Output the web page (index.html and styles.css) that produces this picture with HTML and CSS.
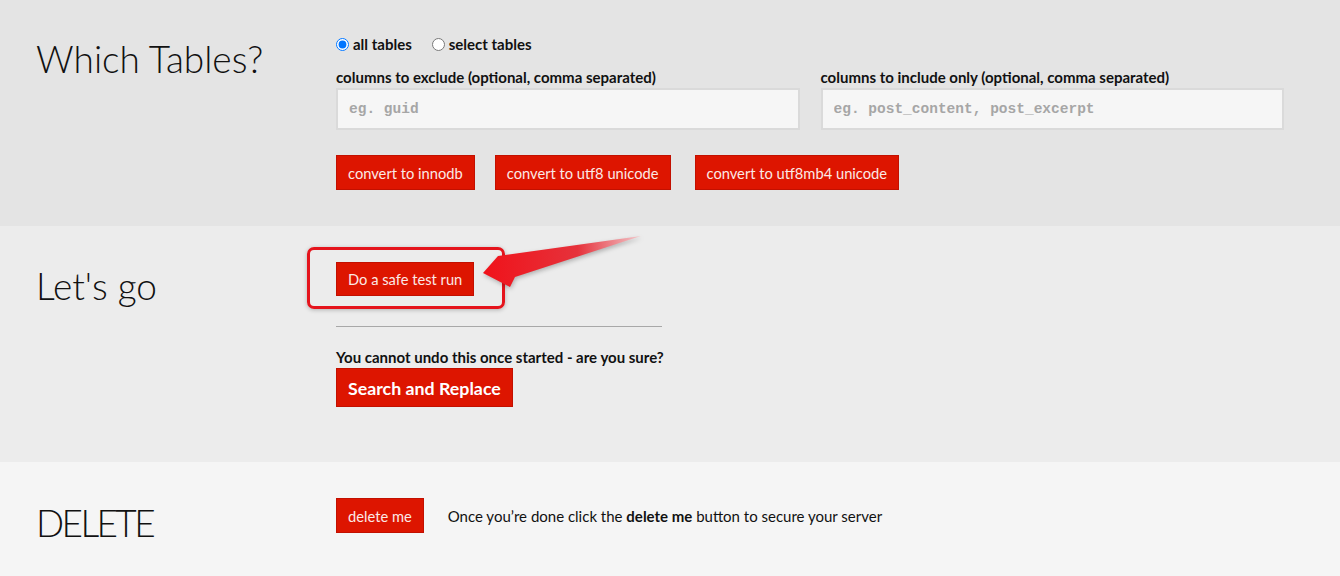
FILE: index.html
```html
<!DOCTYPE html>
<html lang="en">
<head>
    <meta charset="UTF-8">
    <title>Search Replace DB</title>
    <link rel="stylesheet" href="styles.css">
</head>
<body>
    <!-- Which tables -->
    <section class="panel panel-tables">
        <h2 class="panel-title">Which Tables?</h2>
        <div class="panel-body">
            <div class="radio-row">
                <label class="radio"><input type="radio" name="tables" checked> all tables</label>
                <label class="radio"><input type="radio" name="tables"> select tables</label>
            </div>
            <div class="fields">
                <div class="field">
                    <label class="field-label">columns to exclude (optional, comma separated)</label>
                    <input class="text-input" type="text" placeholder="eg. guid">
                </div>
                <div class="field">
                    <label class="field-label">columns to include only (optional, comma separated)</label>
                    <input class="text-input" type="text" placeholder="eg. post_content, post_excerpt">
                </div>
            </div>
            <div class="button-row">
                <button class="btn">convert to innodb</button>
                <button class="btn">convert to utf8 unicode</button>
                <button class="btn">convert to utf8mb4 unicode</button>
            </div>
        </div>
    </section>

    <!-- Let's go -->
    <section class="panel panel-go">
        <h2 class="panel-title">Let's go</h2>
        <div class="panel-body">
            <div class="testrun">
                <button class="btn">Do a safe test run</button>
                <span class="callout"></span>
                <svg class="arrow" width="170" height="60" viewBox="0 0 170 60">
                    <defs>
                        <linearGradient id="arrowfill" x1="0" y1="0" x2="1" y2="0">
                            <stop offset="0" stop-color="#f0121a"/>
                            <stop offset="0.6" stop-color="#e6323b"/>
                            <stop offset="1" stop-color="#f3c8cc"/>
                        </linearGradient>
                    </defs>
                    <polygon points="4,38 19,21 162,1 36,42 31,52" fill="url(#arrowfill)"/>
                </svg>
            </div>
            <hr class="divider">
            <p class="warning">You cannot undo this once started - are you sure?</p>
            <button class="btn btn-big">Search and Replace</button>
        </div>
    </section>

    <!-- Delete -->
    <section class="panel panel-delete">
        <h2 class="panel-title">DELETE</h2>
        <div class="panel-body delete-row">
            <button class="btn">delete me</button>
            <p class="delete-note">Once you’re done click the <strong>delete me</strong> button to secure your server</p>
        </div>
    </section>
</body>
</html>
```

FILE: styles.css
```css
body {
    margin: 0;
    font-family: Lato, "Open Sans", sans-serif;
    font-size: 15px;
    color: #111;
}
.panel {
    display: flex;
    align-items: flex-start;
}
.panel-tables {
    background: #e4e4e4;
    height: 226px;
    box-sizing: border-box;
    padding-top: 34px;
}
.panel-go {
    background: #ececec;
    height: 236px;
    box-sizing: border-box;
    padding-top: 36px;
}
.panel-delete {
    background: #f5f5f5;
    height: 114px;
    box-sizing: border-box;
    padding-top: 36px;
}
.panel-title {
    width: 336px;
    box-sizing: border-box;
    padding-left: 36px;
    margin: 3px 0 0;
    font-size: 37px;
    font-weight: 300;
    line-height: 43px;
    color: #111;
}
.panel-go .panel-title {
    margin-top: 2px;
}
.panel-delete .panel-title {
    margin-top: 3px;
    letter-spacing: -2.6px;
}
.panel-body {
    flex: 1;
    padding-right: 56px;
}

/* radios + fields */
.radio-row {
    display: flex;
    gap: 20px;
    height: 20px;
    align-items: center;
    font-weight: bold;
}
.radio {
    display: flex;
    align-items: center;
    gap: 4px;
}
.radio input {
    margin: 0;
    width: 13px;
    height: 13px;
}
.fields {
    display: flex;
    gap: 21px;
    margin-top: 14px;
}
.field {
    flex: 1;
}
.field-label {
    display: block;
    font-weight: bold;
    line-height: 18px;
    margin-bottom: 2px;
}
.text-input {
    display: block;
    width: 100%;
    box-sizing: border-box;
    height: 42px;
    padding: 0 11px;
    border: 2px solid #dadada;
    background: #f6f6f6;
    font-family: "Liberation Mono", monospace;
    font-size: 14.5px;
    font-weight: bold;
}
.text-input::placeholder {
    color: #a6a6a6;
}
.button-row {
    display: flex;
    gap: 20px;
    margin-top: 25px;
}
.button-row .btn:last-child {
    margin-left: 4px;
}

/* buttons */
.btn {
    background: #dd1500;
    color: #fbe9e6;
    border: 1px solid #c21000;
    height: 35px;
    padding: 0 11px;
    font-family: inherit;
    font-size: 14.7px;
    cursor: pointer;
}
.btn-big {
    height: 39px;
    font-size: 17.8px;
    font-weight: bold;
    color: #fff;
    padding: 0 11px;
}

/* test run callout */
.testrun {
    position: relative;
    display: inline-block;
}
.testrun .btn {
    height: 34px;
}
.callout {
    position: absolute;
    left: -29px;
    top: -15px;
    width: 198px;
    height: 62px;
    box-sizing: border-box;
    border: 3px solid #e5141c;
    border-radius: 7px;
    box-shadow: 0 1px 4px rgba(0, 0, 0, 0.25);
}
.arrow {
    position: absolute;
    left: 143px;
    top: -27px;
    filter: drop-shadow(1px 2px 2px rgba(0, 0, 0, 0.25));
}
.divider {
    width: 326px;
    margin: 30px 0 0;
    border: 0;
    border-top: 1px solid #a8a8a8;
}
.warning {
    margin: 21px 0 2px;
    font-weight: bold;
    line-height: 18px;
}

/* delete */
.delete-row {
    display: flex;
    align-items: center;
    gap: 24px;
}
.delete-note {
    margin: 0;
}
```
